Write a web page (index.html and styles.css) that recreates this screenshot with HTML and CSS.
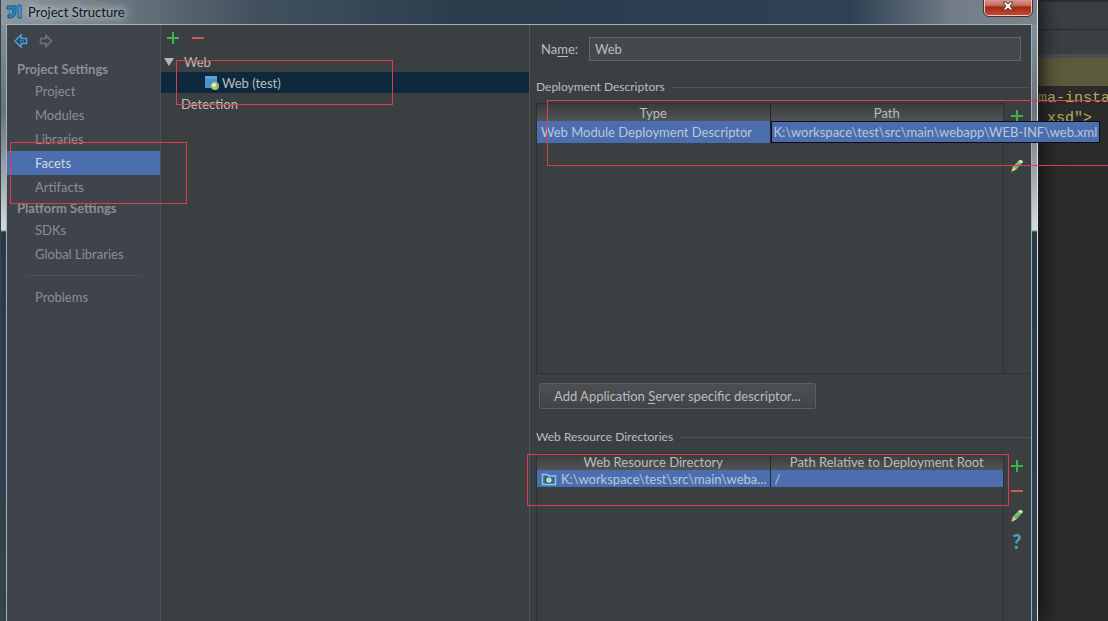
FILE: index.html
```html
<!DOCTYPE html>
<html lang="en">
<head>
<meta charset="utf-8">
<title>Project Structure</title>
<link rel="stylesheet" href="styles.css">
</head>
<body>
<svg class="defs" aria-hidden="true">
  <defs>
    <linearGradient id="pencil-body" x1="0" y1="0" x2="1" y2="1">
      <stop offset="0" stop-color="#a5e08e"/><stop offset="1" stop-color="#3f9a48"/>
    </linearGradient>
    <symbol id="plus" viewBox="0 0 14 14"><path d="M7 1v12M1 7h12" stroke="#3cb54a" stroke-width="2" fill="none"/></symbol>
    <symbol id="minus" viewBox="0 0 14 14"><path d="M1 7h12" stroke="#cf5a56" stroke-width="2" fill="none"/></symbol>
    <symbol id="pencil" viewBox="0 0 14 14">
      <path d="M3 7.500L9 1.500Q12 0 13 3L7 10z" fill="url(#pencil-body)"/>
      <path d="M9 1.500Q12 0 13 3L11.500 4.600L8 2.500z" fill="#c9e8bd"/>
      <path d="M3 7.500L7 10L1 13.500z" fill="#dfc49a"/><path d="M1.600 11.500L3 12.500L1 13.500z" fill="#5b4a3c"/>
    </symbol>
  </defs>
</svg>
<div class="screen">
  <main class="dialog">
    <header class="titlebar">
      <svg class="logo" viewBox="0 0 16 16" aria-hidden="true">
        <path d="M1 2h9v6q0 6-8 6v-3q5 0 5-3V5H1z" fill="#2d86c7" stroke="#165480"/>
        <path d="M2 7h3M2 9h3" stroke="#2d86c7"/>
        <path d="M12 1h3v13h-3z" fill="#45a5dc" stroke="#165480"/>
      </svg>
      <h1 class="title">Project Structure</h1>
      <button class="close" aria-label="Close"><svg viewBox="0 0 12 10"><path d="M1 1h3l2 2 2-2h3L8 5l3 4H8L6 7 4 9H1l3-4z" fill="#fff" stroke="#5b3531"/></svg></button>
    </header>
    <div class="content">
      <nav class="sidebar">
        <div class="history">
          <button class="icon-button" aria-label="Back"><svg viewBox="0 0 14 14"><path d="M7 1L1 7l6 6V9.500h5.500v-5H7z" fill="#263f54" stroke="#4aa5e0" stroke-width="1.500"/><path d="M5 7h5" stroke="#4aa5e0"/></svg></button>
          <button class="icon-button" aria-label="Forward"><svg viewBox="0 0 14 14"><path d="M7 1.500L12.500 7L7 12.500V9.500H1.500v-5H7z" fill="none" stroke="#73777c" stroke-width="1.500"/></svg></button>
        </div>
        <h2 class="group">Project Settings</h2>
        <a class="item" href="#">Project</a>
        <a class="item" href="#">Modules</a>
        <a class="item" href="#">Libraries</a>
        <a class="item selected" href="#" aria-current="page">Facets</a>
        <a class="item" href="#">Artifacts</a>
        <h2 class="group">Platform Settings</h2>
        <a class="item" href="#">SDKs</a>
        <a class="item" href="#">Global Libraries</a>
        <hr class="divider">
        <a class="item" href="#">Problems</a>
      </nav>
      <section class="tree" aria-label="Facets">
        <div class="tree-tools">
          <button class="icon-button" aria-label="Add"><svg><use href="#plus"/></svg></button>
          <button class="icon-button" aria-label="Remove"><svg><use href="#minus"/></svg></button>
        </div>
        <div class="node root"><svg class="arrow" viewBox="0 0 10 8"><path d="M0 0h10L5 8z" fill="#b4b6b8"/></svg>Web</div>
        <div class="node leaf selected-node">
          <svg class="facet" viewBox="0 0 16 16"><path d="M1 1h12v12H1z" fill="#4a94c8"/><path d="M1 1h12v3H1z" fill="#5ba3d3"/><circle cx="11" cy="11" r="4" fill="#a5c86a"/><circle cx="10" cy="10" r="2" fill="#eef0b8"/><path d="M12 8q3 2 1 6" stroke="#6ba5ba" fill="none"/></svg>Web (test)
        </div>
        <div class="node detection">Detection</div>
      </section>
      <section class="detail">
        <div class="name-row">
          <label for="name">Na<u>m</u>e:</label>
          <input id="name" class="name-input" type="text" value="Web">
        </div>
        <h2 class="section-title">Deployment Descriptors</h2>
        <div class="panel descriptors">
          <div class="table-area">
            <table class="grid">
              <thead><tr><th>Type</th><th>Path</th></tr></thead>
              <tbody><tr><td>Web Module Deployment Descriptor</td><td class="path-cell"><span class="expanded">K:\workspace\test\src\main\webapp\WEB-INF\web.xml</span></td></tr></tbody>
            </table>
          </div>
          <div class="side-tools">
            <button class="icon-button" aria-label="Add descriptor"><svg><use href="#plus"/></svg></button>
            <button class="icon-button" aria-label="Remove descriptor"><svg><use href="#minus"/></svg></button>
            <button class="icon-button" aria-label="Edit descriptor"><svg><use href="#pencil"/></svg></button>
          </div>
        </div>
        <button class="add-descriptor">Add Application <u>S</u>erver specific descriptor...</button>
        <h2 class="section-title">Web Resource Directories</h2>
        <div class="panel resources">
          <div class="table-area">
            <table class="grid compact">
              <thead><tr><th>Web Resource Directory</th><th>Path Relative to Deployment Root</th></tr></thead>
              <tbody><tr>
                <td><span class="directory"><svg class="folder" viewBox="0 0 16 14"><path d="M1.500 2.500h5l1 1.500h7v8.500h-13z" fill="#35698f" stroke="#8cc8ea" stroke-width="1.500"/><circle cx="8" cy="8" r="2.500" fill="#e2eec0"/><circle cx="8" cy="8" r="1" fill="#83b368"/></svg>K:\workspace\test\src\main\weba...</span></td>
                <td>/</td>
              </tr></tbody>
            </table>
          </div>
          <div class="side-tools">
            <button class="icon-button" aria-label="Add directory"><svg><use href="#plus"/></svg></button>
            <button class="icon-button" aria-label="Remove directory"><svg><use href="#minus"/></svg></button>
            <button class="icon-button" aria-label="Edit directory"><svg><use href="#pencil"/></svg></button>
            <button class="icon-button help" aria-label="Help">?</button>
          </div>
        </div>
      </section>
    </div>
  </main>
  <aside class="editor">
    <div class="editor-bar"></div>
    <div class="editor-bar tabs"></div>
    <div class="notice"></div>
    <pre class="code">ma-insta
 xsd"&gt;</pre>
  </aside>
  <div class="mark mark-sidebar"></div>
  <div class="mark mark-tree"></div>
  <div class="mark mark-descriptors"></div>
  <div class="mark mark-resources"></div>
</div>
</body>
</html>
```
FILE: styles.css
```css
* { box-sizing: border-box; }

body {
  margin: 0;
  background: #2b2b2b;
  color: #bbbdbf;
  font: 13px/20px Lato, "Open Sans", sans-serif;
}

h1, h2, pre { margin: 0; font-weight: normal; }
button, input { font: inherit; color: inherit; }
u { text-underline-offset: 2px; }

.defs { position: absolute; width: 0; height: 0; }

.screen {
  position: relative;
  display: flex;
  min-height: 100vh;
  overflow: hidden;
}

.dialog {
  position: relative;
  z-index: 1;
  flex: 1;
  min-width: 0;
  display: flex;
  flex-direction: column;
  padding: 0 5px;
  border-right: 1px solid #dce4ea;
  border-left: 1px solid #34424c;
  background:
    linear-gradient(90deg, #8d99a1 0, #68757e 12%, #43515e 24%, #2b3c4d 45%, #2e4053 82%, #727d87 92%, #7b858e 100%) top / 100% 25px no-repeat,
    linear-gradient(#8b98a2 0, #68737b 110px, #a4adb2 180px, #d4dbde 230px, #273a47 232px, #35424d 100%);
  box-shadow: 0 0 18px 3px #101010;
}

.titlebar {
  display: flex;
  align-items: center;
  height: 24px;
}

.logo { width: 16px; height: 16px; }

.title {
  padding: 0 6px;
  font-size: 13px;
  color: #101418;
  text-shadow: 0 0 8px #c3cbd0, 0 0 10px #c3cbd0, 0 0 12px #c3cbd0;
}

.close {
  display: flex;
  justify-content: center;
  align-items: flex-start;
  align-self: flex-start;
  width: 48px;
  height: 16px;
  margin-left: auto;
  padding: 1px;
  border: 1px solid #e4cbc8;
  border-top: 0;
  border-radius: 0 0 5px 5px;
  outline: 1px solid #4e2d2e;
  background: linear-gradient(#d89a90, #c46455 40%, #a52818 45%, #c4472e);
}
.close svg { width: 12px; height: 10px; }

.content {
  flex: 1;
  display: grid;
  grid-template-columns: 154fr 369fr 501fr;
  border: 1px solid #a8b1b8;
  border-bottom: 0;
  background: #3c3f41;
}

.sidebar {
  display: flex;
  flex-direction: column;
  border-right: 1px solid #4b4f52;
  background: #3e434c;
  color: #8c8f93;
}

.history {
  display: flex;
  gap: 11px;
  height: 35px;
  padding: 9px 7px;
}

.icon-button {
  display: block;
  width: 14px;
  height: 14px;
  padding: 0;
  border: 0;
  background: none;
}
.icon-button svg { display: block; width: 14px; height: 14px; }

.group {
  padding-left: 10px;
  font-size: 13px;
  line-height: 19px;
  font-weight: bold;
}

.item {
  padding-left: 28px;
  line-height: 24px;
  color: inherit;
  text-decoration: none;
}
.selected { background: #4b6eaf; color: #d0d6e2; }

.divider {
  width: 116px;
  height: 1px;
  margin: 9px auto;
  border: 0;
  background: #4c5157;
}

.tree { border-right: 1px solid #505355; }

.tree-tools {
  display: flex;
  gap: 11px;
  height: 26px;
  padding: 6px 5px;
}

.node {
  display: flex;
  align-items: center;
  height: 21px;
}
.root { gap: 10px; padding-left: 3px; }
.arrow { width: 10px; height: 8px; }
.leaf { gap: 2px; padding-left: 43px; }
.facet { width: 16px; height: 16px; }
.selected-node { background: #0d293e; }
.detection { padding-left: 20px; }

.detail {
  display: flex;
  flex-direction: column;
  align-items: stretch;
  min-width: 0;
  padding: 12px 1px 0 6px;
}

.name-row {
  display: flex;
  align-items: center;
  gap: 11px;
  padding: 0 9px 0 5px;
}

.name-input {
  flex: 1;
  min-width: 0;
  height: 24px;
  padding: 0 5px;
  border: 1px solid #65686a;
  border-radius: 0;
  background: #45494a;
}

.section-title {
  display: flex;
  align-items: center;
  gap: 7px;
  font-size: 12px;
  line-height: 20px;
}
.section-title::after {
  content: "";
  flex: 1;
  height: 1px;
  background: #515456;
}
.name-row + .section-title { margin-top: 16px; }

.panel { display: flex; }
.descriptors { height: 271px; margin-top: 6px; border-bottom: 1px solid #2f3234; }
.resources { flex: 1; margin-top: 6px; }

.table-area {
  flex: 1;
  min-width: 0;
  border: solid #2f3234;
  border-width: 1px 1px 0;
}

.grid {
  width: 100%;
  border-collapse: collapse;
  table-layout: fixed;
}
.grid th {
  height: 17px;
  padding: 0;
  border-right: 1px solid #25282a;
  background: linear-gradient(#393c3e, #515456);
  font-weight: normal;
  line-height: 16px;
}
.grid td {
  height: 22px;
  padding: 0 4px;
  border-right: 1px solid #25282a;
  background: #4b6eaf;
  color: #bcc6d8;
  line-height: 20px;
  white-space: nowrap;
}
.grid th:last-child, .grid td:last-child { border-right: 0; }
.compact th { height: 16px; }
.compact td { height: 17px; line-height: 16px; }

.path-cell { position: relative; }
.expanded {
  position: absolute;
  z-index: 2;
  top: 0;
  left: 0;
  padding: 0 2px;
  border: 1px solid #0b0c10;
  background: #4b6eaf;
}

.directory { display: flex; align-items: center; gap: 4px; }
.folder { flex: none; width: 16px; height: 14px; }

.side-tools {
  display: flex;
  flex-direction: column;
  align-items: center;
  gap: 11px;
  width: 26px;
  padding-top: 6px;
}
.help {
  color: #4a9dbe;
  font-size: 20px;
  font-weight: 900;
  line-height: 14px;
}

.add-descriptor {
  align-self: flex-start;
  height: 26px;
  margin: 9px 0 18px 3px;
  padding: 0 14px;
  border: 1px solid #5c5f61;
  border-radius: 2px;
  background: linear-gradient(#4c5052, #414547);
}

.editor {
  flex: 0 0 70px;
  min-width: 0;
  background: #2b2b2b;
}
.editor-bar { height: 30px; border-top: 2px solid #2a2c2d; border-bottom: 1px solid #292b2c; background: #3c3f41; }
.tabs { height: 28px; border-top: 0; border-bottom: 4px solid #4a4c4d; }
.notice { height: 28px; background: #5b5a3c; }
.code {
  padding-top: 3px;
  color: #b5b05e;
  font: 15px/20px "Liberation Mono", monospace;
}

.mark {
  position: absolute;
  z-index: 3;
  border: 1px solid #dc3f4b;
  pointer-events: none;
}
.mark-sidebar { left: 10px; top: 142px; width: 177px; height: 62px; }
.mark-tree { left: 176px; top: 60px; width: 217px; height: 45px; }
.mark-descriptors { left: 547px; top: 100px; right: -2px; height: 66px; }
.mark-resources { left: 527px; top: 454px; width: 482px; height: 52px; }
```
